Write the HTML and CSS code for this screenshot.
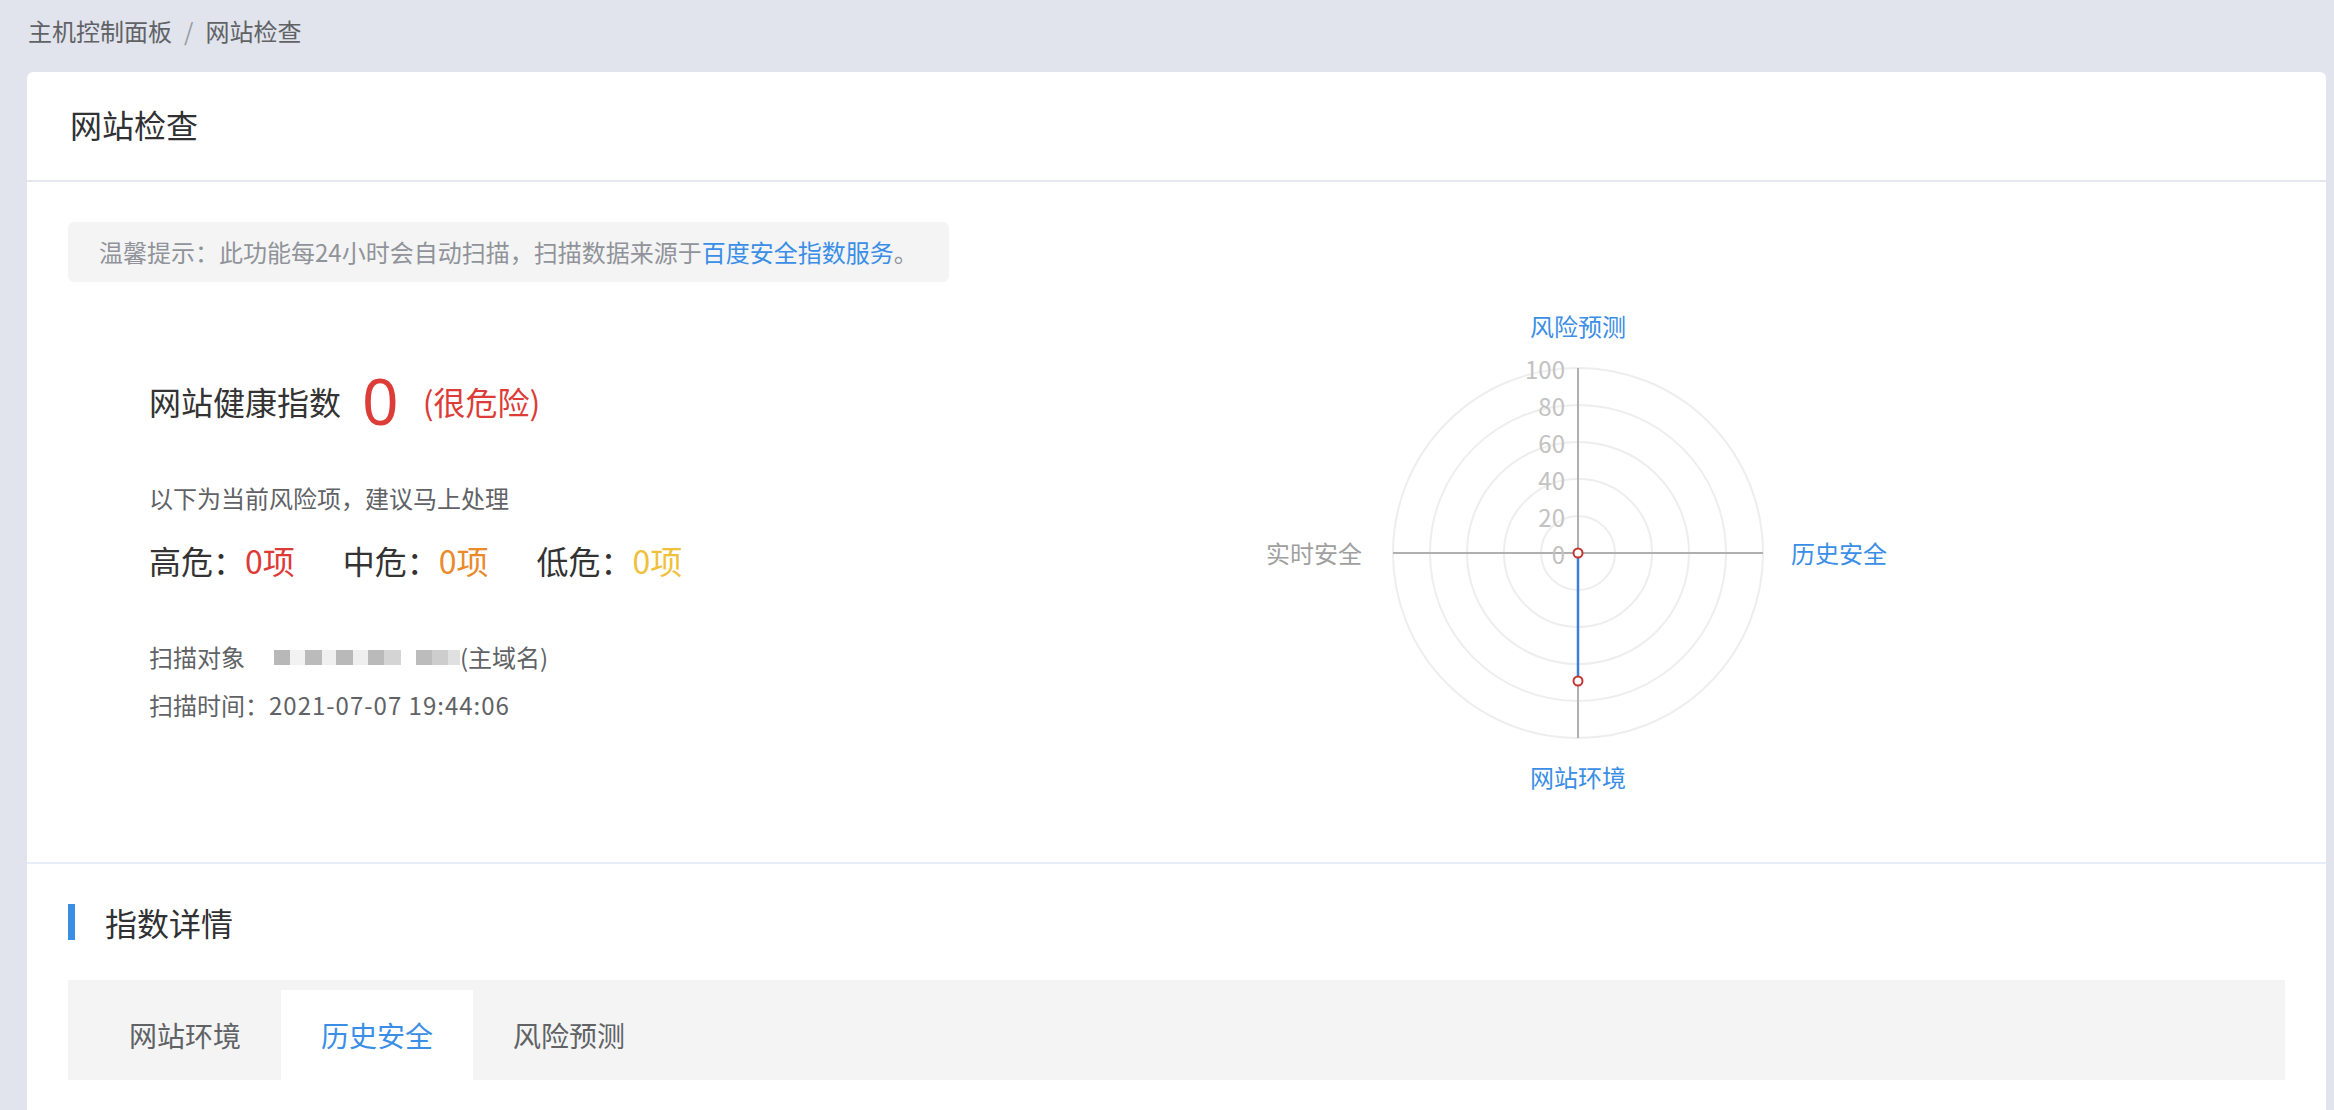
FILE: index.html
```html
<!DOCTYPE html>
<html lang="zh-CN">
<head>
  <meta charset="UTF-8" />
  <title>网站检查</title>
  <link rel="stylesheet" href="styles.css">
</head>
<body>
  <div class="pagina">
    <div class="migas">
      <span>主机控制面板</span><span class="sep">/</span><span>网站检查</span>
    </div>

    <div class="tarjeta">
      <div class="tarjeta-cab">网站检查</div>

      <div class="tarjeta-cuerpo">
        <div class="aviso">温馨提示：此功能每24小时会自动扫描，扫描数据来源于<a href="#">百度安全指数服务</a>。</div>

        <div class="resumen">
          <div class="salud">
            <div class="puntuacion">
              <span class="etiqueta">网站健康指数</span>
              <span class="numero">0</span>
              <span class="nivel">(很危险)</span>
            </div>
            <div class="consejo">以下为当前风险项，建议马上处理</div>
            <div class="riesgos">
              <span class="riesgo">高危：<b class="alto">0项</b></span>
              <span class="riesgo">中危：<b class="medio">0项</b></span>
              <span class="riesgo">低危：<b class="bajo">0项</b></span>
            </div>
            <div class="dato dato-objeto">扫描对象<span class="mosaico"></span>(主域名)</div>
            <div class="dato">扫描时间：<span class="fecha">2021-07-07 19:44:06</span></div>
          </div>

          <svg class="radar" width="700" height="540" viewBox="0 0 700 540">
            <g class="anillos">
              <circle cx="350" cy="265" r="37" />
              <circle cx="350" cy="265" r="74" />
              <circle cx="350" cy="265" r="111" />
              <circle cx="350" cy="265" r="148" />
              <circle cx="350" cy="265" r="185" />
            </g>
            <g class="ejes">
              <line x1="165" y1="265" x2="535" y2="265" />
              <line x1="350" y1="80" x2="350" y2="450" />
            </g>
            <g class="marcas">
              <text x="337" y="80">100</text>
              <text x="337" y="117">80</text>
              <text x="337" y="154">60</text>
              <text x="337" y="191">40</text>
              <text x="337" y="228">20</text>
              <text x="337" y="265">0</text>
            </g>
            <line class="serie" x1="350" y1="265" x2="350" y2="393" />
            <circle class="punto" cx="350" cy="265" r="4.5" />
            <circle class="punto" cx="350" cy="393" r="4.5" />
            <text class="nombre activo" x="350" y="37" text-anchor="middle">风险预测</text>
            <text class="nombre activo" x="563" y="264" text-anchor="start">历史安全</text>
            <text class="nombre activo" x="350" y="488" text-anchor="middle">网站环境</text>
            <text class="nombre" x="134" y="264" text-anchor="end">实时安全</text>
          </svg>
        </div>
      </div>

      <div class="detalle">
        <div class="titulo-seccion">指数详情</div>
        <div class="pestanas">
          <div class="pestana">网站环境</div>
          <div class="pestana activa">历史安全</div>
          <div class="pestana">风险预测</div>
        </div>
        <div class="panel"></div>
      </div>
    </div>
  </div>
</body>
</html>
```

FILE: styles.css
```css
:root {
  --azul: #3a8ee6;
  --fondo: #e1e4ec;
  --texto: #303133;
  --texto-suave: #606266;
  --gris: #909399;
}

* {
  box-sizing: border-box;
}

body {
  margin: 0;
  background-color: var(--fondo);
  font-family: "Noto Sans CJK SC", "Noto Sans", sans-serif;
  color: var(--texto);
  overflow: hidden;
}

.pagina {
  padding: 0 8px 0 27px;
}

.migas {
  height: 62px;
  line-height: 62px;
  padding-left: 1px;
  font-size: 24px;
  color: var(--texto-suave);
}

.migas .sep {
  margin: 0 12px;
  color: #9a9da3;
}

.tarjeta {
  margin-top: 10px;
  background-color: #fff;
  border-radius: 6px 6px 0 0;
}

.tarjeta-cab {
  height: 110px;
  line-height: 104px;
  padding: 0 43px;
  font-size: 32px;
  border-bottom: 2px solid #e4e7ed;
}

.tarjeta-cuerpo {
  padding: 40px 41px 34px;
}

.aviso {
  display: inline-block;
  height: 60px;
  line-height: 60px;
  padding: 0 31px;
  background-color: #f4f4f5;
  border-radius: 6px;
  font-size: 24px;
  color: var(--gris);
}

.aviso a {
  color: var(--azul);
  text-decoration: none;
}

.resumen {
  display: flex;
  margin-top: 6px;
}

.salud {
  flex: none;
  width: 1160px;
  padding: 81px 0 0 81px;
}

.puntuacion {
  display: flex;
  align-items: center;
  height: 64px;
}

.etiqueta {
  font-size: 32px;
  color: #333;
}

.numero {
  margin: 0 24px 0 21px;
  font-family: "Noto Sans", sans-serif;
  font-size: 64px;
  font-weight: normal;
  line-height: 64px;
  color: #dc3d38;
}

.nivel {
  font-size: 32px;
  color: #dc3d38;
}

.consejo {
  margin-top: 47px;
  line-height: 36px;
  font-size: 24px;
  color: var(--texto-suave);
}

.riesgos {
  display: flex;
  gap: 48px;
  margin-top: 22px;
  line-height: 44px;
  font-size: 32px;
  color: #333;
}

.riesgos b {
  font-weight: normal;
}

.alto { color: #dd3a37; }
.medio { color: #ea8a2b; }
.bajo { color: #efc13a; }

.dato {
  display: flex;
  align-items: center;
  line-height: 36px;
  font-size: 24px;
  color: var(--texto-suave);
  margin-top: 12px;
}

.dato-objeto {
  margin-top: 57px;
}

/* dominio tapado con mosaico */
.mosaico {
  display: inline-block;
  width: 186px;
  height: 15px;
  margin: 0 0 0 29px;
  background: linear-gradient(to right,
    #b8b8b8 0 16px, #f2f2f2 16px 31px, #bbb 31px 48px, #f0f0f0 48px 62px,
    #b9b9b9 62px 79px, #efefef 79px 94px, #bababa 94px 110px, #d4d4d4 110px 127px,
    #fff 127px 142px, #bcbcbc 142px 158px, #cdcdcd 158px 174px, #e0e0e0 174px 186px);
}

.fecha {
  letter-spacing: 1px;
}

.radar {
  flex: none;
  display: block;
}

.anillos circle {
  fill: none;
  stroke: #eeeeee;
  stroke-width: 2;
}

.ejes line {
  stroke: #b0b0b0;
  stroke-width: 2;
}

.marcas text {
  font-size: 24px;
  fill: #c2c2c2;
  text-anchor: end;
  dominant-baseline: central;
}

.serie {
  stroke: #3a7fd8;
  stroke-width: 2.5;
}

.punto {
  fill: #fff;
  stroke: #c23531;
  stroke-width: 2;
}

.nombre {
  font-size: 24px;
  fill: #a0a0a0;
  dominant-baseline: central;
}

.nombre.activo {
  fill: var(--azul);
}

.detalle {
  border-top: 2px solid #e8eef8;
  padding: 40px 41px;
}

.titulo-seccion {
  height: 36px;
  line-height: 36px;
  padding-left: 30px;
  border-left: 7px solid var(--azul);
  font-size: 32px;
}

.pestanas {
  display: flex;
  align-items: flex-end;
  height: 100px;
  margin-top: 40px;
  padding-left: 21px;
  background-color: #f4f4f4;
}

.pestana {
  width: 192px;
  height: 90px;
  line-height: 90px;
  text-align: center;
  font-size: 28px;
  color: var(--texto-suave);
}

.pestana.activa {
  background-color: #fff;
  color: var(--azul);
}

.panel {
  height: 300px;
}
```
